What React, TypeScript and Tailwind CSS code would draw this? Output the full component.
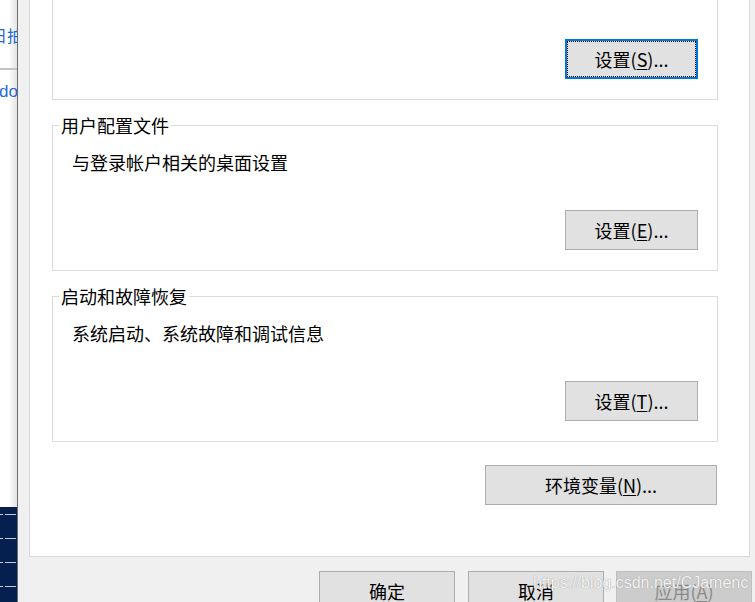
import React from "react";

const font = "font-['Noto_Sans_CJK_SC','Microsoft_YaHei',sans-serif]";

function Btn({
  children,
  w = "w-[133px]",
  focused = false,
  disabled = false,
}: {
  children: React.ReactNode;
  w?: string;
  focused?: boolean;
  disabled?: boolean;
}) {
  if (focused) {
    return (
      <div className={`${w} h-[40px] shrink-0 border-2 border-[#0078d7] bg-[#e1e1e1] p-0`}>
        <div className="flex h-full w-full items-center justify-center border border-dotted border-black text-[18px] leading-[20px] text-black">
          {children}
        </div>
      </div>
    );
  }
  return (
    <div
      className={`${w} h-[40px] shrink-0 flex items-center justify-center border text-[18px] leading-[20px] ${
        disabled
          ? "border-[#bfbfbf] bg-[#cccccc] text-[#8a8a8a]"
          : "border-[#adadad] bg-[#e1e1e1] text-black"
      }`}
    >
      {children}
    </div>
  );
}

function Group({
  label,
  desc,
  button,
}: {
  label: string;
  desc: string;
  button: React.ReactNode;
}) {
  return (
    <div className="relative mt-[25px] flex h-[146px] flex-col border border-[#dcdcdc]">
      <div className="absolute left-[6px] top-[-11px] bg-white px-[2px] text-[18px] leading-[20px] text-black">
        {label}
      </div>
      <div className="pl-[19px] pt-[26px] text-[18px] leading-[20px] text-black">{desc}</div>
      <div className="mt-auto mb-[20px] mr-[19px] self-end">{button}</div>
    </div>
  );
}

function Dash() {
  return (
    <div className="flex h-[1px] w-[17px] gap-[2px]">
      <div className="h-[1px] w-[3px] bg-[#c9ccd6]" />
      <div className="h-[1px] w-[11px] bg-[#c9ccd6]" />
    </div>
  );
}

export default function App() {
  return (
    <div className={`relative flex h-[602px] w-[755px] overflow-hidden bg-[#f0f0f0] ${font}`}>
      {/* background window strip */}
      <div className="flex w-[18px] shrink-0 flex-col border-r border-[#6d6d6d]">
        <div className="flex flex-1 flex-col overflow-hidden bg-linear-to-r from-white via-white to-[#e4e4e4]">
          <div className="h-[68px] overflow-hidden">
            <div className="ml-[-9px] mt-[25px] whitespace-nowrap text-[16px] leading-[20px] text-[#1f6cd4]">
              日拍摄
            </div>
          </div>
          <div className="h-[2px] bg-[#c4c4c4]" />
          <div className="overflow-hidden">
            <div className="ml-[-1px] mt-[12px] whitespace-nowrap font-['Liberation_Sans',sans-serif] text-[17px] leading-[20px] text-[#1f6cd4]">
              doc
            </div>
          </div>
        </div>
        <div className="flex h-[95px] flex-col gap-[23px] bg-[#05204f] pt-[7px]">
          <Dash />
          <Dash />
          <Dash />
          <Dash />
        </div>
      </div>

      {/* dialog */}
      <div className="flex flex-1 flex-col pl-[11px]">
        <div className="flex h-[557px] w-[721px] shrink-0 flex-col border-x border-b border-[#d9d9d9] bg-white pl-[22px] pr-[31px]">
          <div className="flex h-[100px] shrink-0 items-end justify-end border-x border-b border-[#dcdcdc] pb-[20px] pr-[19px]">
            <Btn focused>
              设置(<u className="underline-offset-2">S</u>)...
            </Btn>
          </div>
          <Group
            label="用户配置文件"
            desc="与登录帐户相关的桌面设置"
            button={
              <Btn>
                设置(<u className="underline-offset-2">E</u>)...
              </Btn>
            }
          />
          <Group
            label="启动和故障恢复"
            desc="系统启动、系统故障和调试信息"
            button={
              <Btn>
                设置(<u className="underline-offset-2">T</u>)...
              </Btn>
            }
          />
          <div className="mt-[23px] mr-[1px] self-end">
            <Btn w="w-[232px]">
              环境变量(<u className="underline-offset-2">N</u>)...
            </Btn>
          </div>
        </div>
        <div className="mt-[14px] flex gap-[13px] pl-[290px]">
          <Btn w="w-[136px]">确定</Btn>
          <Btn w="w-[136px]">取消</Btn>
          <div className="ml-[-1px]">
            <Btn w="w-[136px]" disabled>
              应用(<u className="underline-offset-2">A</u>)
            </Btn>
          </div>
        </div>
      </div>

      {/* watermark */}
      <div className="pointer-events-none absolute left-[533px] top-[574px] whitespace-nowrap font-['Liberation_Sans',Arial,sans-serif] text-[16px] leading-[18px] text-[#f4f4f4] [text-shadow:0_0_1px_#8a8a8a]">
        https://blog.csdn.net/CJamenc
      </div>
    </div>
  );
}
